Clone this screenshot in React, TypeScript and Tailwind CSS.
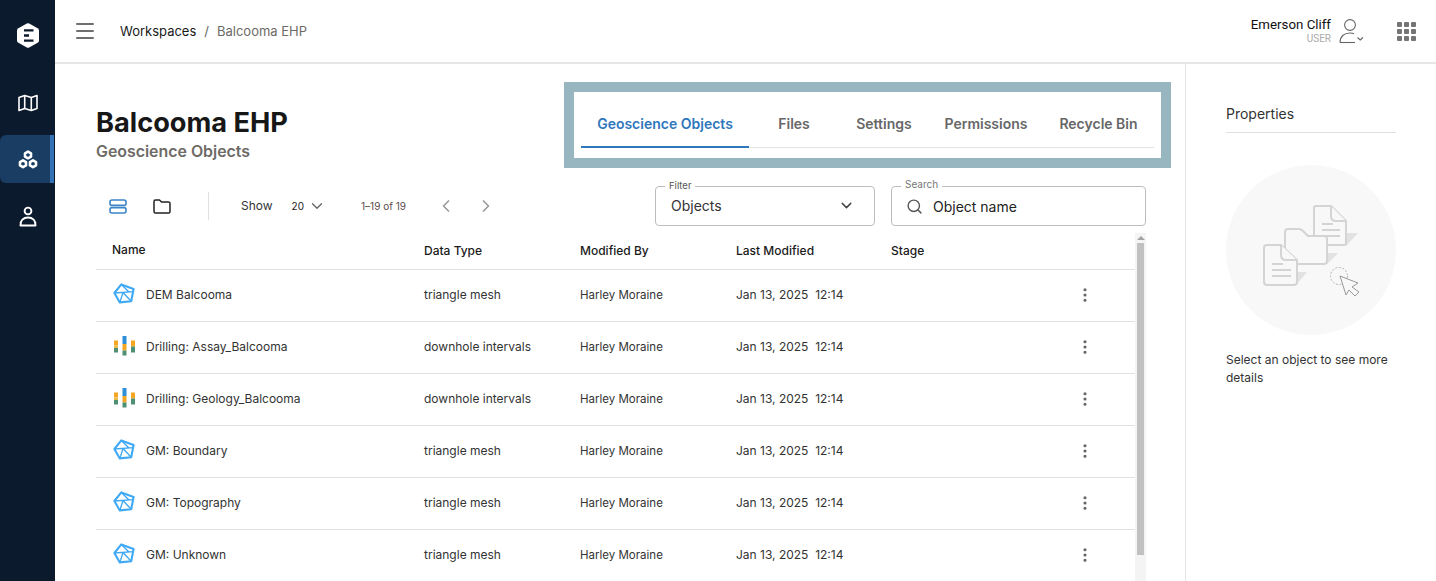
import { ChevronDown, ChevronLeft, ChevronRight, EllipsisVertical, Menu, Search } from 'lucide-react';

const font = { fontFamily: 'Inter, "Noto Sans", sans-serif' };

const rows = [
  { name: 'DEM Balcooma', type: 'triangle mesh', kind: 'mesh' },
  { name: 'Drilling: Assay_Balcooma', type: 'downhole intervals', kind: 'drill' },
  { name: 'Drilling: Geology_Balcooma', type: 'downhole intervals', kind: 'drill' },
  { name: 'GM: Boundary', type: 'triangle mesh', kind: 'mesh' },
  { name: 'GM: Topography', type: 'triangle mesh', kind: 'mesh' },
  { name: 'GM: Unknown', type: 'triangle mesh', kind: 'mesh' },
];

const tabs = ['Geoscience Objects', 'Files', 'Settings', 'Permissions', 'Recycle Bin'];
const tabWidths = ['w-[168px]', 'w-[90px]', 'w-[90px]', 'w-[114px]', 'w-[111px]'];

function Logo() {
  return (
    <svg width="22" height="25" viewBox="0 0 22 25">
      <path d="M9.8 0.6 Q11 0 12.2 0.6 L20.6 5.2 Q22 6 22 7.6 V17.4 Q22 19 20.6 19.8 L12.2 24.4 Q11 25 9.8 24.4 L1.4 19.8 Q0 19 0 17.4 V7.6 Q0 6 1.4 5.2 Z" fill="#fff" />
      <path d="M7 6.2 H16.5 V8.6 H7 Z M7 11.3 H12 V13.7 H7 Z M7 16.4 H16.5 V18.8 H7 Z" fill="#0c1a2e" />
    </svg>
  );
}

function MapIcon() {
  return (
    <svg width="20" height="18" viewBox="0 0 20 18" fill="none" stroke="#fff" strokeWidth="1.6" strokeLinejoin="round">
      <path d="M1 3.5 L6.7 1.5 L13.3 3.5 L19 1.5 V14.5 L13.3 16.5 L6.7 14.5 L1 16.5 Z" />
      <path d="M6.7 1.5 V14.5 M13.3 3.5 V16.5" />
    </svg>
  );
}

function ObjectsIcon() {
  return (
    <svg width="20" height="19" viewBox="0 0 20 19" fill="none" stroke="#fff" strokeWidth="2.6" strokeLinejoin="round">
      <path d="M10 1.6 L13 3.3 V6.6 L10 8.3 L7 6.6 V3.3 Z" />
      <path d="M5 10.4 L8 12.1 V15.4 L5 17.1 L2 15.4 V12.1 Z" />
      <path d="M15 10.4 L18 12.1 V15.4 L15 17.1 L12 15.4 V12.1 Z" />
    </svg>
  );
}

function PersonIcon() {
  return (
    <svg width="18" height="21" viewBox="0 0 18 21" fill="none" stroke="#fff" strokeWidth="1.9">
      <circle cx="9" cy="5" r="3.4" />
      <path d="M1.5 19.5 H16.5 C17 14.5 13.5 11.5 9 11.5 C4.5 11.5 1 14.5 1.5 19.5 Z" strokeLinejoin="round" />
    </svg>
  );
}

function MeshIcon() {
  return (
    <svg width="22" height="21" viewBox="0 0 22 21" fill="none" stroke="#3fa9f5" strokeWidth="2.1" strokeLinejoin="round">
      <path d="M8.3 1.4 L20.6 6 L18.2 18.2 L6.8 19.4 L1.4 10 Z" />
      <path d="M8.3 1.4 L16 9 M1.4 10 L20.6 8.6 M10 9.6 L6.8 19.4 M10 9.6 L18.2 18.2" strokeWidth="1.4" />
    </svg>
  );
}

function DrillIcon() {
  return (
    <svg width="21" height="20" viewBox="0 0 21 20">
      <rect x="0" y="4.5" width="4" height="5" fill="#f5a623" />
      <rect x="0" y="9.5" width="4" height="2.5" fill="#e9b949" />
      <rect x="0" y="12" width="4" height="4.5" fill="#4f8f74" />
      <rect x="8.5" y="0" width="4" height="8" fill="#2f8fd8" />
      <rect x="8.5" y="8" width="4" height="6.5" fill="#f5a623" />
      <rect x="8.5" y="14.5" width="4" height="5" fill="#4f8f74" />
      <rect x="17" y="4.5" width="4" height="6" fill="#f5a623" />
      <rect x="17" y="10.5" width="4" height="6" fill="#4f8f74" />
    </svg>
  );
}

function UserMenuIcon() {
  return (
    <svg width="26" height="26" viewBox="0 0 26 26" fill="none" stroke="#666" strokeWidth="1.1">
      <circle cx="11" cy="7" r="5.4" />
      <path d="M1 24.5 C1 18.5 5 15 11 15 C12.5 15 14 15.2 15 15.8" />
      <path d="M1 24.5 H16" />
      <path d="M18.5 19.5 L21.2 22 L24 19.5" />
    </svg>
  );
}

function AppsIcon() {
  return (
    <div className="grid grid-cols-3 gap-[2px]">
      {Array.from({ length: 9 }).map((_, i) => (
        <div key={i} className="w-[5px] h-[5px] rounded-[1px] bg-[#757575]" />
      ))}
    </div>
  );
}

function ListIcon() {
  return (
    <svg width="18" height="15" viewBox="0 0 18 15" fill="none" stroke="#3d85c6" strokeWidth="1.6">
      <rect x="1" y="1" width="16" height="5.4" rx="2" />
      <rect x="1" y="8.6" width="16" height="5.4" rx="2" />
    </svg>
  );
}

function FolderIcon() {
  return (
    <svg width="18" height="15" viewBox="0 0 18 15" fill="none" stroke="#222" strokeWidth="1.5" strokeLinejoin="round">
      <path d="M1 2.5 Q1 1 2.5 1 H6.5 L8.5 3 H15.5 Q17 3 17 4.5 V12.5 Q17 14 15.5 14 H2.5 Q1 14 1 12.5 Z" />
    </svg>
  );
}

function EmptyIllustration() {
  return (
    <svg width="170" height="170" viewBox="0 0 170 170" fill="none">
      <circle cx="85" cy="85" r="85" fill="#f8f8f8" />
      <path d="M120 68 H132 L120 81 Z M101 88 H112 L101 99 Z M71 107 H81 L71 119 Z" fill="#e2e2e2" />
      <g stroke="#d4d4d4" strokeWidth="2" strokeLinejoin="round" fill="#f8f8f8">
        <path d="M88 43 Q88 41 90 41 H105 L120 56 V78 Q120 80 118 80 H90 Q88 80 88 78 Z" />
        <path d="M105 41 V51 Q105 56 110 56 H120" />
        <path d="M96 59 H107 M96 65 H114 M96 71 H114" />
        <path d="M59 67 Q59 64 62 64 H73 Q75 64 77 66 L82 71 H98 Q101 71 101 74 V96 Q101 99 98 99 H62 Q59 99 59 96 Z" />
        <path d="M38 83 Q38 80 41 80 H55 L71 95 V117 Q71 120 68 120 H41 Q38 120 38 117 Z" />
        <path d="M55 80 V90 Q55 95 60 95 H71" />
        <path d="M46 99 H57 M46 105 H65 M46 111 H65" />
      </g>
      <circle cx="113" cy="111" r="8.5" stroke="#aaa" strokeWidth="0.9" strokeDasharray="2 1.6" />
      <path d="M114 111 L132 118 L126 122 L133 127 L129 131 L123 125 L120 130 Z" stroke="#999" strokeWidth="1" fill="#f8f8f8" strokeLinejoin="round" />
    </svg>
  );
}

export default function App() {
  return (
    <div style={font} className="flex h-screen w-full overflow-hidden bg-white text-[#1a1a1a]">
      {/* Left rail */}
      <div className="w-[55px] shrink-0 bg-[#0c1a2e] flex flex-col items-center">
        <div className="h-[70px] flex items-center justify-center w-full">
          <Logo />
        </div>
        <div className="h-[65px] flex items-center justify-center w-full">
          <MapIcon />
        </div>
        <div className="h-[48px] w-[54px] self-start flex items-center justify-center pl-[6px] bg-[#1a3d63] rounded-l-md border-r-[4px] border-[#3272b5]">
          <ObjectsIcon />
        </div>
        <div className="h-[66px] flex items-center justify-center w-full">
          <PersonIcon />
        </div>
      </div>

      <div className="flex-1 min-w-0 flex flex-col">
        {/* Top bar */}
        <div className="h-[64px] shrink-0 border-b-2 border-[#e6e6e6] flex items-center">
          <Menu className="ml-[18px] text-[#6f6f6f]" size={24} strokeWidth={2} absoluteStrokeWidth />
          <div className="ml-[23px] flex items-center text-[13px] leading-none">
            <span className="text-[#1a1a1a]">Workspaces</span>
            <span className="mx-[8px] text-[#666]">/</span>
            <span className="text-[#6e6a66]">Balcooma EHP</span>
          </div>
          <div className="ml-auto flex items-center">
            <div className="flex flex-col items-end mr-[8px]">
              <span style={{ fontFamily: 'Roboto, sans-serif' }} className="text-[13.3px] leading-[16px] text-[#111]">Emerson Cliff</span>
              <span style={{ fontFamily: 'Roboto, sans-serif' }} className="text-[10px] leading-[12px] text-[#aaa]">USER</span>
            </div>
            <UserMenuIcon />
            <div className="ml-[32px] mr-[20px]">
              <AppsIcon />
            </div>
          </div>
        </div>

        <div className="flex-1 min-h-0 flex">
          {/* Main column */}
          <div className="w-[1130px] shrink-0 pl-[41px] pt-[18px] overflow-hidden">
            <div className="flex items-start justify-between">
              <div className="pt-[26px]">
                <h1 className="text-[27.2px] leading-[30px] font-bold text-[#171717]">Balcooma EHP</h1>
                <p className="mt-[4px] text-[15.9px] leading-[20px] font-semibold text-[#6e6a66]">Geoscience Objects</p>
              </div>
              <div className="mr-[14px] w-[607px] h-[86px] border-[10px] border-[#97b6bf] pl-[7px] pr-[7px] pt-[10px]">
                <div className="flex border-b border-[#e2e2e2] h-[46px]">
                  {tabs.map((t, i) => (
                    <div
                      key={t}
                      className={`${tabWidths[i]} h-[46px] pb-[2px] flex items-center justify-center text-[14px] font-semibold border-b-2 ${i === 0 ? 'text-[#2f77bc] border-[#2f77bc]' : 'text-[#676767] border-transparent'}`}
                    >
                      {t}
                    </div>
                  ))}
                </div>
              </div>
            </div>

            {/* Toolbar */}
            <div className="flex items-center h-[40px] mt-[18px] mr-[39px]">
              <div className="ml-[13px]"><ListIcon /></div>
              <div className="ml-[26px]"><FolderIcon /></div>
              <div className="ml-[37px] w-px h-[28px] bg-[#e0e0e0]" />
              <span className="ml-[32px] text-[12px] text-[#333]">Show</span>
              <span className="ml-[19px] text-[10px] text-[#222]">20</span>
              <ChevronDown className="ml-[4px] text-[#666]" size={18} strokeWidth={1.8} />
              <span className="ml-[35px] text-[10px] text-[#5b4a4a]">1–19 of 19</span>
              <ChevronLeft className="ml-[30px] text-[#9a9a9a]" size={20} strokeWidth={2} />
              <ChevronRight className="ml-[20px] text-[#9a9a9a]" size={20} strokeWidth={2} />

              <div className="ml-auto relative w-[220px] h-[40px] border border-[#bdbdbd] rounded-[4px] flex items-center pl-[15px] pr-[19px] pb-px justify-between">
                <span className="absolute -top-[7px] left-[9px] bg-white px-[4px] text-[9.5px] leading-[12px] text-[#555]">Filter</span>
                <span className="text-[14px] text-[#333]">Objects</span>
                <ChevronDown className="text-[#444]" size={17} strokeWidth={2} />
              </div>
              <div className="ml-[16px] relative w-[255px] h-[40px] border border-[#bdbdbd] rounded-[4px] flex items-center pl-[14px]">
                <span className="absolute -top-[9px] left-[9px] bg-white px-[4px] text-[10px] leading-[12px] text-[#777]">Search</span>
                <Search className="text-[#555]" size={17} strokeWidth={2} />
                <span className="ml-[10px] text-[14px] text-[#222]">Object name</span>
              </div>
            </div>

            {/* Table */}
            <div className="flex mt-[7px]">
              <div className="w-[1039px] shrink-0">
                <div className="h-[37px] grid grid-cols-[328px_156px_156px_155px_1fr] items-center border-b border-[#e0e0e0] text-[12px] font-medium text-[#1a1a1a]">
                  <span className="pl-[16px] -mt-[2px]">Name</span>
                  <span>Data Type</span>
                  <span>Modified By</span>
                  <span>Last Modified</span>
                  <span>Stage</span>
                </div>
                {rows.map((r) => (
                  <div key={r.name} className="h-[52px] pb-[2px] grid grid-cols-[328px_156px_156px_155px_1fr] items-center border-b border-[#e0e0e0] text-[12px] text-[#333]">
                    <div className="pl-[17px] flex items-center">
                      <div className="w-[22px] h-[22px] -mt-[2px] flex items-center justify-center">
                        {r.kind === 'mesh' ? <MeshIcon /> : <DrillIcon />}
                      </div>
                      <span className="ml-[11px]">{r.name}</span>
                    </div>
                    <span>{r.type}</span>
                    <span className="pt-[2px] text-[11.5px]">Harley Moraine</span>
                    <span>Jan 13, 2025&nbsp;&nbsp;12:14</span>
                    <div className="flex justify-end pr-[41px]">
                      <EllipsisVertical className="text-[#666]" size={18} strokeWidth={2.2} />
                    </div>
                  </div>
                ))}
              </div>
              <div className="w-[11px] shrink-0 bg-[#f4f4f4] flex flex-col items-center pt-[3px] h-[360px]">
                <div className="w-0 h-0 border-x-[4px] border-x-transparent border-b-[4px] border-b-[#a3a3a3] mb-[3px]" />
                <div className="w-[7px] h-[312px] bg-[#c1c1c1]" />
              </div>
            </div>
          </div>

          {/* Properties */}
          <div className="flex-1 min-w-0 border-l border-[#e6e6e6] pl-[40px] pr-[40px] pt-[40px]">
            <div className="h-[29px] border-b border-[#e0e0e0] text-[14px] leading-[20px] text-[#333]">Properties</div>
            <div className="mt-[32px]"><EmptyIllustration /></div>
            <p className="mt-[16px] text-[12px] leading-[18px] text-[#333]">Select an object to see more details</p>
          </div>
        </div>
      </div>
    </div>
  );
}
